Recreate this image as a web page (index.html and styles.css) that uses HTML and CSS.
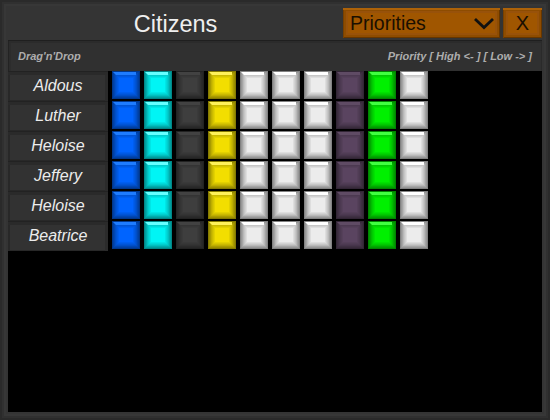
FILE: index.html
```html
<!DOCTYPE html>
<html lang="en">
<head>
<meta charset="utf-8">
<title>Citizens</title>
<link rel="stylesheet" href="styles.css">
</head>
<body>
<div class="window">
  <header class="titlebar">
    <h1 class="title">Citizens</h1>
    <div class="actions">
      <div class="btn dropdown"><span>Priorities</span>
        <svg class="chev" width="22" height="13" viewBox="0 0 22 13"><path d="M2 2 L11 10.5 L20 2" fill="none" stroke="#111" stroke-width="2.8"/></svg>
      </div>
      <div class="btn close">X</div>
    </div>
  </header>
  <div class="content">
    <div class="infobar"><span>Drag'n'Drop</span><span>Priority [ High &lt;- ] [ Low -&gt; ]</span></div>
    <div class="rows">
      <div class="row"><div class="name">Aldous</div><div class="tiles"><i class="tile blue"></i><i class="tile cyan"></i><i class="tile dark"></i><i class="tile yellow"></i><i class="tile white"></i><i class="tile white"></i><i class="tile white"></i><i class="tile purple"></i><i class="tile green"></i><i class="tile white"></i></div></div>
      <div class="row"><div class="name">Luther</div><div class="tiles"><i class="tile blue"></i><i class="tile cyan"></i><i class="tile dark"></i><i class="tile yellow"></i><i class="tile white"></i><i class="tile white"></i><i class="tile white"></i><i class="tile purple"></i><i class="tile green"></i><i class="tile white"></i></div></div>
      <div class="row"><div class="name">Heloise</div><div class="tiles"><i class="tile blue"></i><i class="tile cyan"></i><i class="tile dark"></i><i class="tile yellow"></i><i class="tile white"></i><i class="tile white"></i><i class="tile white"></i><i class="tile purple"></i><i class="tile green"></i><i class="tile white"></i></div></div>
      <div class="row"><div class="name">Jeffery</div><div class="tiles"><i class="tile blue"></i><i class="tile cyan"></i><i class="tile dark"></i><i class="tile yellow"></i><i class="tile white"></i><i class="tile white"></i><i class="tile white"></i><i class="tile purple"></i><i class="tile green"></i><i class="tile white"></i></div></div>
      <div class="row"><div class="name">Heloise</div><div class="tiles"><i class="tile blue"></i><i class="tile cyan"></i><i class="tile dark"></i><i class="tile yellow"></i><i class="tile white"></i><i class="tile white"></i><i class="tile white"></i><i class="tile purple"></i><i class="tile green"></i><i class="tile white"></i></div></div>
      <div class="row"><div class="name">Beatrice</div><div class="tiles"><i class="tile blue"></i><i class="tile cyan"></i><i class="tile dark"></i><i class="tile yellow"></i><i class="tile white"></i><i class="tile white"></i><i class="tile white"></i><i class="tile purple"></i><i class="tile green"></i><i class="tile white"></i></div></div>
    </div>
  </div>
</div>
</body>
</html>
```
FILE: styles.css
```css
* { box-sizing: border-box; }
html, body { margin: 0; padding: 0; background: #333; }
body { width: 550px; height: 420px; overflow: hidden; font-family: "Liberation Sans", Arial, sans-serif; }

.window {
  width: 550px; height: 420px;
  padding: 8px;
  display: flex; flex-direction: column;
  background: #343434;
  box-shadow: inset 0 0 0 2px #2a2a2a, inset 0 0 0 4px #303030, inset 0 0 0 6px #373737;
}
.titlebar { height: 32px; display: flex; align-items: center; flex: none; }
.title {
  margin: 0; width: 335px; text-align: center;
  font-size: 23.5px; font-weight: normal; color: #efefef; line-height: 32px;
}
.actions { display: flex; gap: 3px; height: 30px; align-self: flex-start; }
.btn {
  height: 30px;
  display: flex; align-items: center;
  color: #1a0f00; font-size: 19.5px;
  background: #a05600;
  box-shadow: inset 0 2px 0 #ad6208, inset 1px 0 0 #784000, inset -1px 0 0 #663600, inset 0 -1px 0 #663600,
    inset 0 0 0 3px #8e4c00, inset 0 0 0 5px #98520a;
}
.dropdown { width: 157px; padding: 0 5px 0 7px; justify-content: space-between; }
.chev { margin-top: 1px; }
.close { width: 39px; justify-content: center; font-size: 20px; }

.content { flex: 1; background: #000; display: flex; flex-direction: column; }
.infobar {
  position: relative;
  height: 31px; flex: none;
  display: flex; align-items: center; justify-content: space-between;
  padding: 0 10px;
  background: #303030;
  box-shadow: inset 0 1px 0 #1f1f1f, inset 1px 0 0 #232323, inset -1px 0 0 #2a2a2a, inset 0 3px 0 #2b2b2b, inset 3px 0 0 #2c2c2c;
  color: #adadad; font-size: 11px; font-style: italic; font-weight: bold;
}
.rows { display: flex; flex-direction: column; }
.row { height: 30px; display: flex; }
.name {
  width: 100px; height: 30px;
  display: flex; align-items: center; justify-content: center;
  padding-bottom: 1px;
  color: #ececec; font-size: 16px; font-style: italic;
  background: #323232;
  box-shadow: inset 0 1px 0 #222, inset 0 4px 0 #2a2a2a, inset 2px 0 0 #282828, inset -3px 0 0 #2b2b2b, inset 0 -1px 0 #282828;
}
.tiles { display: flex; gap: 4px; padding-left: 4px; }
.tile {
  display: block; position: relative;
  width: 28px; height: 28px;
  background: var(--c);
  box-shadow:
    inset 0 0 0 1px color-mix(in srgb, var(--c) 55%, black),
    inset 0 0 0 2px color-mix(in srgb, var(--c) 64%, black),
    inset 0 0 0 3px color-mix(in srgb, var(--c) 70%, black),
    inset 0 0 0 4px color-mix(in srgb, var(--c) 78%, black),
    inset 0 0 0 5px color-mix(in srgb, var(--c) 84%, black),
    inset 0 0 0 6px color-mix(in srgb, var(--c) 89%, black),
    inset 0 0 0 7px color-mix(in srgb, var(--c) 94%, black);
}
.tile::before {
  content: ""; position: absolute; left: 1px; top: 1px;
  width: 23px; height: 3px;
  background: var(--h);
  clip-path: polygon(0 0, 100% 0, 100% 100%, 3px 100%);
}
.blue   { --c: #0064ff; --h: #1e7cff; }
.cyan   { --c: #00f5f5; --h: #66ffff; }
.dark   { --c: #3e3e3e; --h: #424242; }
.yellow { --c: #f2de00; --h: #fff25a; }
.white  { --c: #ececec; --h: #ffffff; }
.purple { --c: #5a4460; --h: #5f4b64; }
.green  { --c: #00f000; --h: #40ff40; }
```
